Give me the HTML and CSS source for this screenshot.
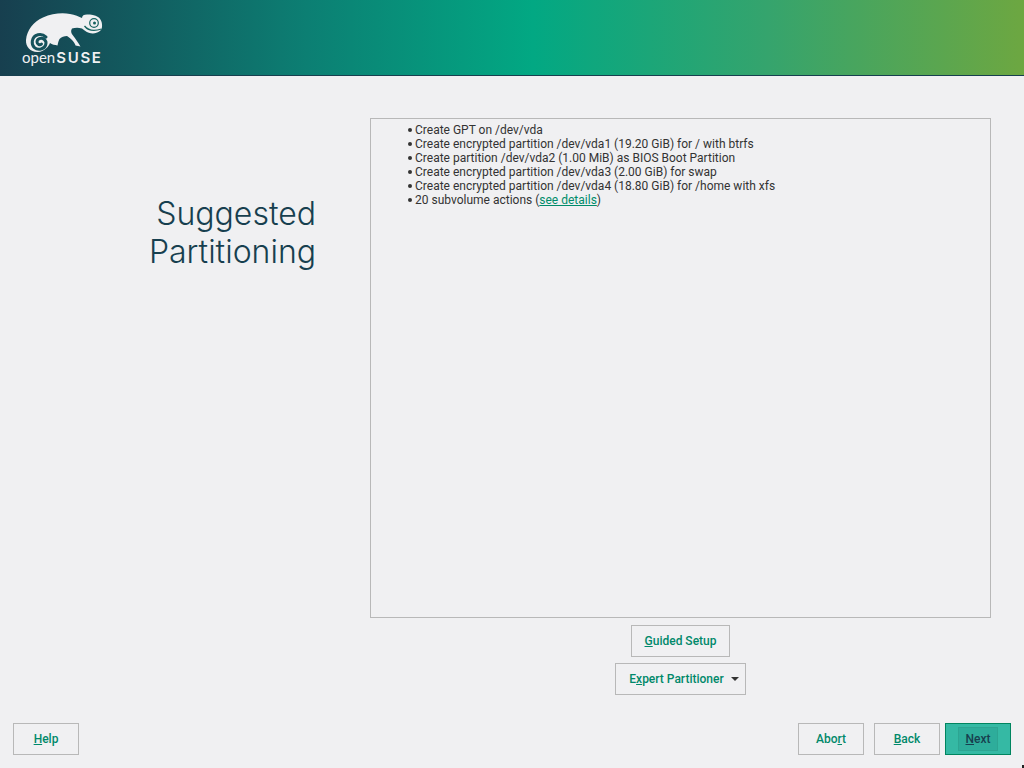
FILE: index.html
```html
<!DOCTYPE html>
<html lang="en">
<head>
<meta charset="utf-8">
<title>Suggested Partitioning</title>
<link rel="stylesheet" href="styles.css">
</head>
<body>
<header class="banner">
  <div class="logo">
    <svg class="mascot" width="84" height="44" viewBox="22 10 84 44">
      <path class="body" d="M26 40C27 30 33 22 43 17.500C52 13.500 62 12.500 70 14C75 15 79 16.500 82 18C82 15.500 84 14.500 87 14.500C91 14.500 95 15 98 17C101 19 102.500 23 102 27C101.500 31 98 33 93 33.500C89 33.800 85 31 82 28.500C78 27.500 75 27.800 72 28.500C70.500 31 71 33 73 35.500C75.500 38.500 78 42.500 80.500 46.500L75.500 45.500C75 43 72 39 67 36C64.500 36 61 37 59.500 39C58.500 41 58 43 57.500 45.500C55 45 52 44.500 50 43C48.500 47 44 51.500 38 52C31 52.500 25.500 47 26 40Z"/>
      <path class="cut" d="M46 37C41.500 32.500 33.500 34 32.300 41C31.500 47 36 50 41 49C46 48 47.500 42 44.300 39.500C41 37 37 39 37 42C37 44.500 40 45.500 41.500 44"/>
      <circle class="eye" cx="94" cy="23" r="4.300"/>
      <circle class="pupil" cx="94.500" cy="23" r="1.500"/>
      <path class="mouth" d="M84.500 26C88 30.500 94 31.500 101.500 29"/>
    </svg>
    <div class="wordmark"><span class="open">open</span><span class="suse">SUSE</span></div>
  </div>
</header>
<main class="content">
  <h1 class="title">Suggested<br>Partitioning</h1>
  <section class="panel">
    <div class="box">
      <ul class="actions">
        <li>Create GPT on /dev/vda</li>
        <li>Create encrypted partition /dev/vda1 (19.20 GiB) for / with btrfs</li>
        <li>Create partition /dev/vda2 (1.00 MiB) as BIOS Boot Partition</li>
        <li>Create encrypted partition /dev/vda3 (2.00 GiB) for swap</li>
        <li>Create encrypted partition /dev/vda4 (18.80 GiB) for /home with xfs</li>
        <li>20 subvolume actions (<a class="link" href="#">see details</a>)</li>
      </ul>
    </div>
    <div class="tools">
      <button class="btn guided"><u>G</u>uided Setup</button>
      <button class="btn expert">E<u>x</u>pert Partitioner<span class="caret"></span></button>
    </div>
  </section>
</main>
<footer class="footer">
  <button class="btn nav"><u>H</u>elp</button>
  <div class="right">
    <button class="btn nav">Abo<u>r</u>t</button>
    <button class="btn nav"><u>B</u>ack</button>
    <button class="btn nav next"><span class="focus"><u>N</u>ext</span></button>
  </div>
</footer>
<div class="cursor"></div>
</body>
</html>
```
FILE: styles.css
```css
* { box-sizing: border-box; }
html, body { margin: 0; height: 100%; }
body {
  width: 1024px;
  height: 768px;
  overflow: hidden;
  position: relative;
  background: #f0f0f2;
  font-family: Roboto, "Liberation Sans", sans-serif;
  color: #333;
  display: flex;
  flex-direction: column;
}
.banner {
  height: 76px;
  flex: none;
  border-bottom: 1px solid #173f4f;
  background: linear-gradient(90deg, #173f4f 0%, #0c7f73 30%, #02a883 52%, #35a46d 75%, #6da741 100%);
  padding: 10px 0 0 22px;
}
.logo { width: 84px; }
.mascot { display: block; }
.body { fill: #f0f0f2; }
.cut { fill: none; stroke: #15525c; stroke-width: 3; stroke-linecap: round; }
.eye { fill: none; stroke: #15625f; stroke-width: 1.200; }
.pupil { fill: #15625f; }
.mouth { fill: none; stroke: #15625f; stroke-width: 1.300; }
.wordmark {
  margin-top: -5px;
  color: #f0f0f2;
  display: flex;
  align-items: baseline;
  white-space: nowrap;
}
.open { font: 400 15px/16px Lato, sans-serif; }
.suse { font: 600 15px/16px Inter, sans-serif; letter-spacing: 1.700px; margin-left: 1px; }
.content {
  flex: 1;
  display: flex;
  padding: 42px 33px 0 0;
  min-height: 0;
}
.title {
  width: 316px;
  margin: 77px 54px 0 0;
  font: 300 32px/38px Inter, sans-serif;
  color: #173f4f;
  text-align: right;
}
.panel { width: 621px; }
.box {
  height: 500px;
  border: 1px solid #b8b8b8;
  padding: 4px 0 0 44px;
}
.actions {
  margin: 0;
  padding: 0;
  list-style: none;
  font-size: 12px;
  line-height: 14px;
}
.actions li { position: relative; }
.actions li::before {
  content: "";
  position: absolute;
  left: -7px;
  top: 5px;
  width: 4px;
  height: 4px;
  border-radius: 50%;
  background: #333;
}
.link { color: #008c6a; }
.tools {
  display: flex;
  flex-direction: column;
  align-items: center;
  gap: 6px;
  margin-top: 7px;
}
.btn {
  height: 32px;
  border: 1px solid #b8b8b8;
  background: transparent;
  color: #00896a;
  font: 500 12px/14px Roboto, sans-serif;
  padding: 0;
}
.guided { width: 99px; }
.expert { width: 131px; padding-left: 7px; }
.caret {
  display: inline-block;
  margin-left: 7px;
  vertical-align: 2px;
  border-left: 4px solid transparent;
  border-right: 4px solid transparent;
  border-top: 4px solid #333;
}
.footer {
  flex: none;
  height: 45px;
  padding: 0 13px 13px;
  display: flex;
  justify-content: space-between;
}
.right { display: flex; }
.nav { width: 66px; }
.right .nav { margin-left: 10px; }
.right .next { margin-left: 5px; }
.next {
  background: #35b9a4;
  border-color: #00855f;
  color: #173f4f;
  padding: 3px 12px;
}
.focus {
  display: block;
  height: 24px;
  width: 40px;
  border: 1px solid #2da592;
  background: #2ead9b;
  line-height: 22px;
}
.cursor {
  position: absolute;
  left: 1022px;
  top: 765px;
  width: 2px;
  height: 3px;
  background: #222;
}
```
